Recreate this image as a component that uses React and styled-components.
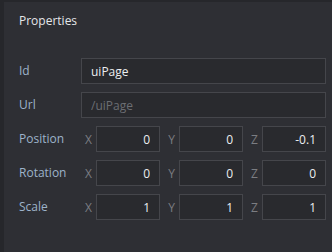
import React from "react"
import styled, { createGlobalStyle } from "styled-components"

const GlobalStyle = createGlobalStyle`
  html, body {
    margin: 0;
    padding: 0;
    background: #2e2f34;
  }
  body {
    font-family: "Open Sans", "Noto Sans", sans-serif;
    font-size: 12px;
  }
`

const rows = [
  { label: "Position", values: ["0", "0", "-0.1"] },
  { label: "Rotation", values: ["0", "0", "0"] },
  { label: "Scale", values: ["1", "1", "1"] },
]

function App() {
  return (
    <>
      <GlobalStyle />
      <Panel>
        <Title>Properties</Title>
        <Form>
          <Label>Id</Label>
          <TextField defaultValue="uiPage" />
          <Label>Url</Label>
          <TextField placeholder="/uiPage" />
          {rows.map(row => (
            <React.Fragment key={row.label}>
              <Label>{row.label}</Label>
              <Vector>
                {["X", "Y", "Z"].map((axis, i) => (
                  <Axis key={axis}>
                    <AxisLabel>{axis}</AxisLabel>
                    <NumberField defaultValue={row.values[i]} />
                  </Axis>
                ))}
              </Vector>
            </React.Fragment>
          ))}
        </Form>
      </Panel>
    </>
  )
}

const Panel = styled.div`
  width: 332px;
  height: 252px;
  box-sizing: border-box;
  border-left: 4px solid #26272b;
  border-top: 2px solid #26272b;
  padding: 11px 6px 0 15px;
`

const Title = styled.div`
  line-height: 16px;
  color: #e4e6e9;
  margin-bottom: 29px;
`

const Form = styled.div`
  display: grid;
  grid-template-columns: 62px 1fr;
  row-gap: 8px;
  align-items: center;
`

const Label = styled.div`
  color: #9db3ca;
  line-height: 16px;
`

const TextField = styled.input`
  box-sizing: border-box;
  width: 100%;
  height: 26px;
  margin: 0;
  padding: 0 9px;
  background: #292a2e;
  border: 1px solid #45464b;
  border-radius: 0;
  outline: none;
  color: #eceef0;
  font: inherit;

  &::placeholder {
    color: #6c6e73;
  }
`

const Vector = styled.div`
  display: grid;
  grid-template-columns: repeat(3, 1fr);
  column-gap: 4px;
`

const Axis = styled.div`
  display: grid;
  grid-template-columns: 15px 1fr;
  align-items: center;
`

const AxisLabel = styled.span`
  color: #7b7d82;
  text-align: center;
`

const NumberField = styled(TextField)`
  min-width: 0;
  text-align: right;
  padding: 0 9px;
`

export default App
